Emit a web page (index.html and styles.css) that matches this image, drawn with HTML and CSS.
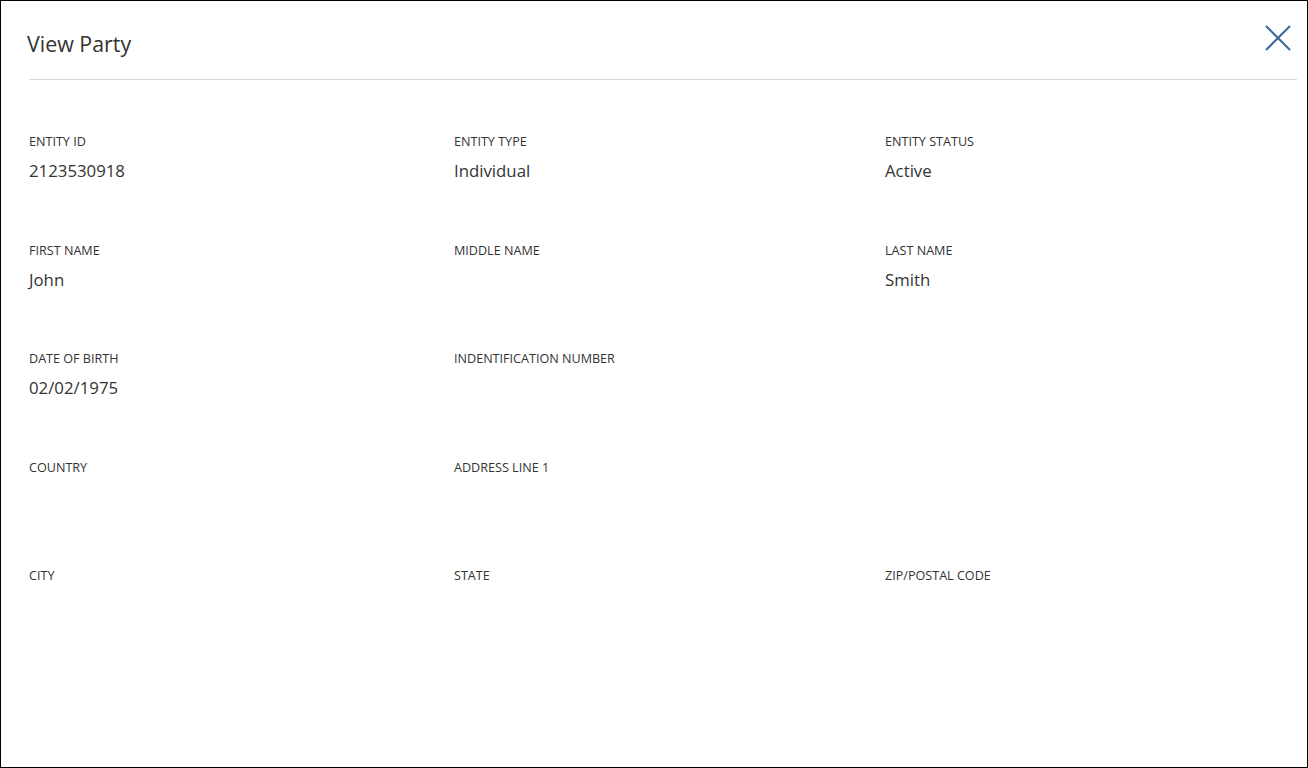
FILE: index.html
```html
<!DOCTYPE html>
<html lang="en">
<head>
    <meta charset="UTF-8">
    <title>View Party</title>
    <link rel="stylesheet" href="styles.css">
</head>
<body>
    <div class="modal">
        <header class="modal-header">
            <h2>View Party</h2>
            <button class="close-btn" aria-label="Close">
                <svg width="26" height="26" viewBox="0 0 26 26">
                    <path d="M1 1 L25 25 M25 1 L1 25" stroke="#3b6896" stroke-width="2" fill="none"/>
                </svg>
            </button>
        </header>

        <div class="details">
            <div class="field"><label>ENTITY ID</label><div class="value">2123530918</div></div>
            <div class="field"><label>ENTITY TYPE</label><div class="value">Individual</div></div>
            <div class="field"><label>ENTITY STATUS</label><div class="value">Active</div></div>

            <div class="field"><label>FIRST NAME</label><div class="value">John</div></div>
            <div class="field"><label>MIDDLE NAME</label><div class="value"></div></div>
            <div class="field"><label>LAST NAME</label><div class="value">Smith</div></div>

            <div class="field"><label>DATE OF BIRTH</label><div class="value">02/02/1975</div></div>
            <div class="field"><label>INDENTIFICATION NUMBER</label><div class="value"></div></div>
            <div class="field"></div>

            <div class="field"><label>COUNTRY</label><div class="value"></div></div>
            <div class="field"><label>ADDRESS LINE 1</label><div class="value"></div></div>
            <div class="field"></div>

            <div class="field"><label>CITY</label><div class="value"></div></div>
            <div class="field"><label>STATE</label><div class="value"></div></div>
            <div class="field"><label>ZIP/POSTAL CODE</label><div class="value"></div></div>
        </div>
    </div>
</body>
</html>
```

FILE: styles.css
```css
* {
    box-sizing: border-box;
}
body {
    margin: 0;
    font-family: 'Open Sans', sans-serif;
    color: #333;
    background: #fff;
}
.modal {
    height: 768px;
    border: 1px solid #000;
    padding: 0 10px 0 28px;
}
.modal-header {
    display: flex;
    justify-content: space-between;
    align-items: center;
    height: 79px;
    border-bottom: 1px solid #d9d9d9;
}
.modal-header h2 {
    margin: 6px 0 0 -2px;
    font-size: 21.4px;
    font-weight: 400;
    color: #333;
}
.close-btn {
    background: none;
    border: none;
    padding: 0;
    margin-top: -4px;
    margin-right: 6px;
    cursor: pointer;
}
.close-btn svg {
    display: block;
}
.details {
    display: grid;
    grid-template-columns: 425px 431px 1fr;
    padding-top: 54px;
}
.field {
    height: 108.5px;
}
.field label {
    display: block;
    font-size: 12.6px;
    line-height: 16px;
    color: #333;
}
.field .value {
    margin-top: 10px;
    font-size: 16.8px;
    line-height: 22px;
    color: #333;
}
```
